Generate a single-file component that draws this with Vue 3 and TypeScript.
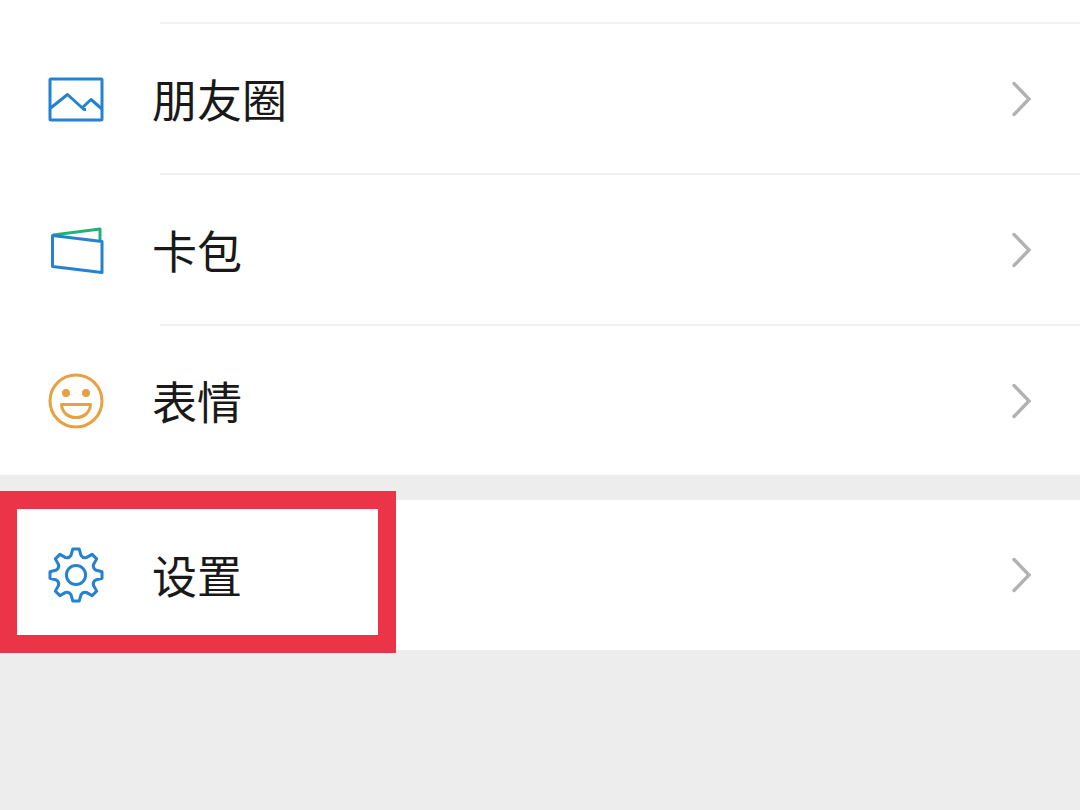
<script setup lang="ts">
type IconName = 'moments' | 'cards' | 'stickers' | 'settings'

interface MenuItem {
  id: IconName
  label: string
  highlighted?: boolean
}

const groups: MenuItem[][] = [
  [
    { id: 'moments', label: '朋友圈' },
    { id: 'cards', label: '卡包' },
    { id: 'stickers', label: '表情' },
  ],
  [{ id: 'settings', label: '设置', highlighted: true }],
]

// Outline of an eight-toothed gear centred on the origin.
function gearPath(): string {
  const turn = (x: number, y: number, step: number): string => {
    const a = (step * Math.PI) / 4
    const px = x * Math.cos(a) - y * Math.sin(a)
    const py = x * Math.sin(a) + y * Math.cos(a)
    return `${px.toFixed(2)} ${py.toFixed(2)}`
  }
  let d = ''
  for (let i = 0; i < 8; i++) {
    d += `${i === 0 ? 'M' : 'L'}${turn(-3.2, -26, i)}`
    d += `L${turn(3.2, -26, i)}`
    d += `L${turn(5, -19.6, i)}`
    d += `Q${turn(6.9, -16.6, i)} ${turn(10.3, -17.4, i)}`
  }
  return d + 'Z'
}

const gear = gearPath()
</script>

<template>
  <main class="page">
    <div class="previous"></div>
    <ul v-for="(group, index) in groups" :key="index" class="group">
      <li v-for="item in group" :key="item.id" class="item">
        <button type="button" class="row">
          <svg class="icon" viewBox="0 0 60 61" aria-hidden="true">
            <g v-if="item.id === 'moments'" class="blue">
              <rect x="4" y="11" width="52" height="41" rx="1" />
              <path d="M4 40.5 21.5 26.5 38 41.5H40M36.5 39.5 45 31.5 56 41" />
            </g>
            <g v-else-if="item.id === 'cards'">
              <path class="green" d="M7 16 54 10V21" />
              <path class="blue" d="M6.5 16.5 56 22.5V53.5L6.5 47.5Z" />
            </g>
            <g v-else-if="item.id === 'stickers'" class="orange">
              <circle cx="30" cy="31" r="26" />
              <circle class="eye" cx="20" cy="23" r="4" />
              <circle class="eye" cx="40" cy="23" r="4" />
              <path d="M15.5 34.5H44.5C44 42.5 38 47.5 30 47.5S16 42.5 15.5 34.5Z" />
            </g>
            <g v-else class="blue" transform="translate(30 31)">
              <path :d="gear" />
              <circle r="9.6" />
            </g>
          </svg>
          <span class="label">{{ item.label }}</span>
          <svg class="chevron" viewBox="0 0 22 41" aria-hidden="true">
            <path d="M4 5.5 19 21 4 36.5" />
          </svg>
        </button>
        <span v-if="item.highlighted" class="highlight"></span>
      </li>
    </ul>
  </main>
</template>

<style>
body {
  margin: 0;
  background: #ededed;
}
</style>

<style scoped>
.page {
  min-height: 100vh;
  background: #ededed;
  font-family: "Noto Sans CJK SC", sans-serif;
}

.previous {
  height: 24px;
  background: linear-gradient(#f1f1f1, #f1f1f1) 160px 22px / 100% 2px no-repeat #fff;
}

.group {
  margin: 0 0 25px;
  padding: 0;
  list-style: none;
  background: #fff;
}

.group:last-child {
  margin-bottom: 0;
  padding-bottom: 1px;
}

.item {
  position: relative;
}

.item + .item {
  padding-top: 2px;
  background: linear-gradient(#f1f1f1, #f1f1f1) 160px 0 / 100% 2px no-repeat;
}

.row {
  display: flex;
  align-items: center;
  width: 100%;
  min-height: 149px;
  padding: 0 48px 0 46px;
  border: 0;
  background: none;
  color: #191919;
  font: inherit;
  text-align: left;
  cursor: pointer;
}

.icon {
  flex: none;
  width: 60px;
  height: 61px;
  margin-right: 46px;
  fill: none;
  stroke-width: 3;
  stroke-linejoin: round;
}

.blue {
  stroke: #2482d0;
}

.green {
  stroke: #20b276;
}

.orange {
  stroke: #e9a043;
}

.eye {
  fill: #e9a043;
  stroke: none;
}

.label {
  flex: 1;
  font-size: 45px;
  line-height: 61px;
}

.chevron {
  flex: none;
  width: 22px;
  height: 41px;
  fill: none;
  stroke: #b2b2b2;
  stroke-width: 3.4;
  stroke-linecap: round;
}

.highlight {
  position: absolute;
  top: -9px;
  left: 0;
  box-sizing: border-box;
  width: 396px;
  height: 162px;
  border: 18px solid #eb3447;
  border-left-width: 17px;
  pointer-events: none;
}
</style>
